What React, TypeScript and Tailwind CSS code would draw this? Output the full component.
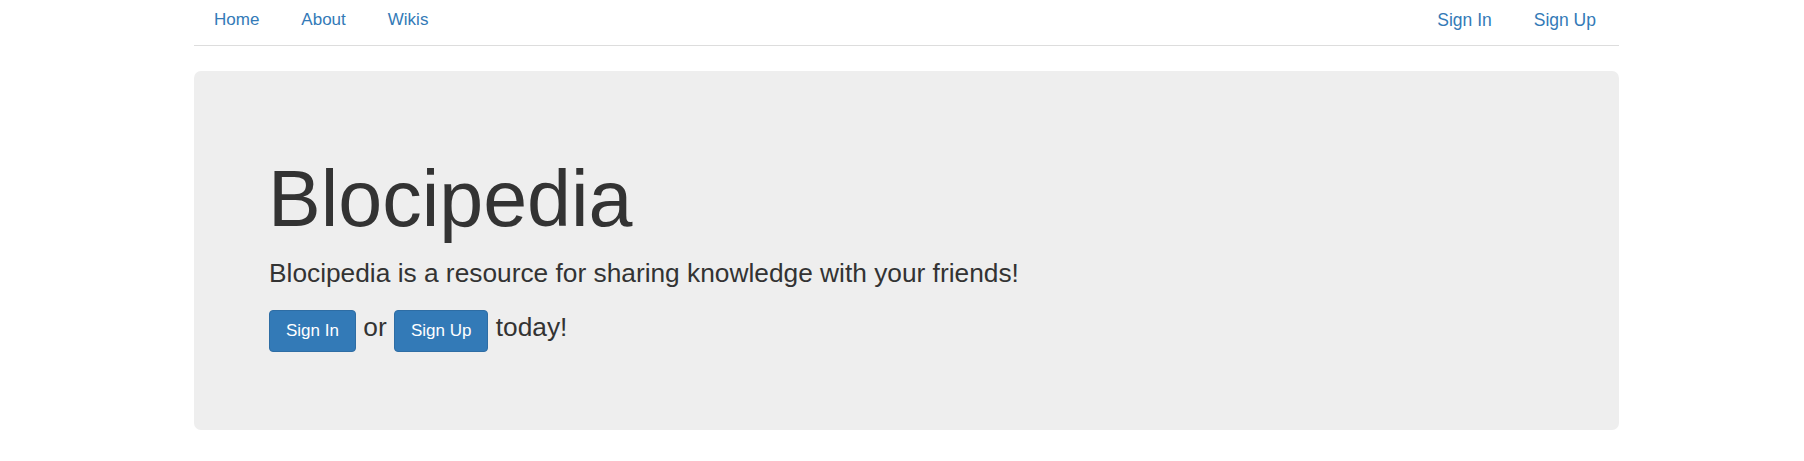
export default function App() {
  return (
    <div className="min-h-screen bg-white font-['Liberation_Sans',Arial,sans-serif] text-[#333]">
      <div className="ml-[194px] w-[1425px]">
        {/* top nav */}
        <nav className="flex h-[46px] justify-between border-b border-[#ddd] text-[17px] leading-[24px] text-[#337ab7]">
          <ul className="-ml-[1px] flex pt-[8px]">
            <li><a href="#" className="px-[21px]">Home</a></li>
            <li><a href="#" className="px-[21px]">About</a></li>
            <li><a href="#" className="px-[21px]">Wikis</a></li>
          </ul>
          <ul className="mr-[2px] flex pt-[8px] text-[17.5px]">
            <li><a href="#" className="px-[21px]">Sign In</a></li>
            <li><a href="#" className="px-[21px]">Sign Up</a></li>
          </ul>
        </nav>

        {/* jumbotron */}
        <div className="mt-[25px] h-[359px] rounded-[7px] bg-[#eee] px-[75px] pt-[58px]">
          <h1 className="mt-[27px] -ml-[1px] text-[79px] leading-[1.1]">Blocipedia</h1>
          <p className="mt-[12px] text-[26.3px] leading-[36px]">
            Blocipedia is a resource for sharing knowledge with your friends!
          </p>
          <p className="mt-[18px] text-[26.3px] leading-[36px]">
            <a
              href="#"
              className="inline-block rounded-[4px] border border-[#2e6da4] bg-[#337ab7] px-[16px] py-[8px] text-[17px] leading-[24px] text-white"
            >
              Sign In
            </a>{' '}
            or{' '}
            <a
              href="#"
              className="inline-block rounded-[4px] border border-[#2e6da4] bg-[#337ab7] px-[16px] py-[8px] text-[17px] leading-[24px] text-white"
            >
              Sign Up
            </a>{' '}
            today!
          </p>
        </div>
      </div>
    </div>
  );
}
